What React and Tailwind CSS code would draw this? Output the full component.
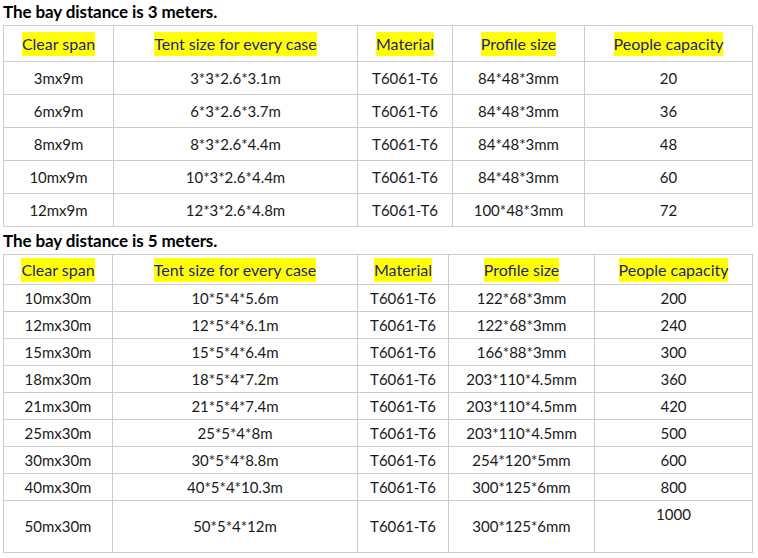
import React from 'react';

const bay3 = [
  ['3mx9m', '3*3*2.6*3.1m', 'T6061-T6', '84*48*3mm', '20'],
  ['6mx9m', '6*3*2.6*3.7m', 'T6061-T6', '84*48*3mm', '36'],
  ['8mx9m', '8*3*2.6*4.4m', 'T6061-T6', '84*48*3mm', '48'],
  ['10mx9m', '10*3*2.6*4.4m', 'T6061-T6', '84*48*3mm', '60'],
  ['12mx9m', '12*3*2.6*4.8m', 'T6061-T6', '100*48*3mm', '72'],
];

const bay5 = [
  ['10mx30m', '10*5*4*5.6m', 'T6061-T6', '122*68*3mm', '200'],
  ['12mx30m', '12*5*4*6.1m', 'T6061-T6', '122*68*3mm', '240'],
  ['15mx30m', '15*5*4*6.4m', 'T6061-T6', '166*88*3mm', '300'],
  ['18mx30m', '18*5*4*7.2m', 'T6061-T6', '203*110*4.5mm', '360'],
  ['21mx30m', '21*5*4*7.4m', 'T6061-T6', '203*110*4.5mm', '420'],
  ['25mx30m', '25*5*4*8m', 'T6061-T6', '203*110*4.5mm', '500'],
  ['30mx30m', '30*5*4*8.8m', 'T6061-T6', '254*120*5mm', '600'],
  ['40mx30m', '40*5*4*10.3m', 'T6061-T6', '300*125*6mm', '800'],
];

const headers = ['Clear span', 'Tent size for every case', 'Material', 'Profile size', 'People capacity'];

const Head = ({ label }) => (
  <th className="border border-[#cdcdcd] p-0 font-normal text-center align-middle">
    <span className="bg-[#ffff00] text-[#1f1f80] text-[16px] leading-[24px] inline-block">{label}</span>
  </th>
);

const Cell = ({ children, top }) => (
  <td className={`border border-[#cdcdcd] p-0 text-center text-[15px] text-[#1a1a1a] ${top ? 'align-top pt-[2px]' : 'align-middle'}`}>
    {children}
  </td>
);

export default function App() {
  return (
    <div className="w-[758px] h-[558px] bg-white overflow-hidden pl-[3px] pt-[1px] font-['Lato',sans-serif]">
      <div className="text-[17px] font-bold text-black leading-[21px] tracking-[-0.1px]">The bay distance is 3 meters.</div>
      <table className="border-collapse table-fixed w-[749px] mt-[3px]">
        <colgroup>
          <col className="w-[110px]" />
          <col className="w-[244px]" />
          <col className="w-[95px]" />
          <col className="w-[132px]" />
          <col className="w-[168px]" />
        </colgroup>
        <thead>
          <tr className="h-[36px]">
            {headers.map((h) => <Head key={h} label={h} />)}
          </tr>
        </thead>
        <tbody>
          {bay3.map((r) => (
            <tr key={r[0]} className="h-[33px]">
              {r.map((c, i) => <Cell key={i}>{c}</Cell>)}
            </tr>
          ))}
        </tbody>
      </table>

      <div className="text-[17px] font-bold text-black leading-[21px] mt-[3px] tracking-[-0.1px]">The bay distance is 5 meters.</div>
      <table className="border-collapse table-fixed w-[749px] mt-[3px]">
        <colgroup>
          <col className="w-[109px]" />
          <col className="w-[245px]" />
          <col className="w-[91px]" />
          <col className="w-[146px]" />
          <col className="w-[158px]" />
        </colgroup>
        <thead>
          <tr className="h-[30px]">
            {headers.map((h) => <Head key={h} label={h} />)}
          </tr>
        </thead>
        <tbody>
          {bay5.map((r) => (
            <tr key={r[0]} className="h-[27px]">
              {r.map((c, i) => <Cell key={i}>{c}</Cell>)}
            </tr>
          ))}
          <tr className="h-[52px]">
            <Cell>50mx30m</Cell>
            <Cell>50*5*4*12m</Cell>
            <Cell>T6061-T6</Cell>
            <Cell>300*125*6mm</Cell>
            <Cell top>1000</Cell>
          </tr>
        </tbody>
      </table>
    </div>
  );
}
